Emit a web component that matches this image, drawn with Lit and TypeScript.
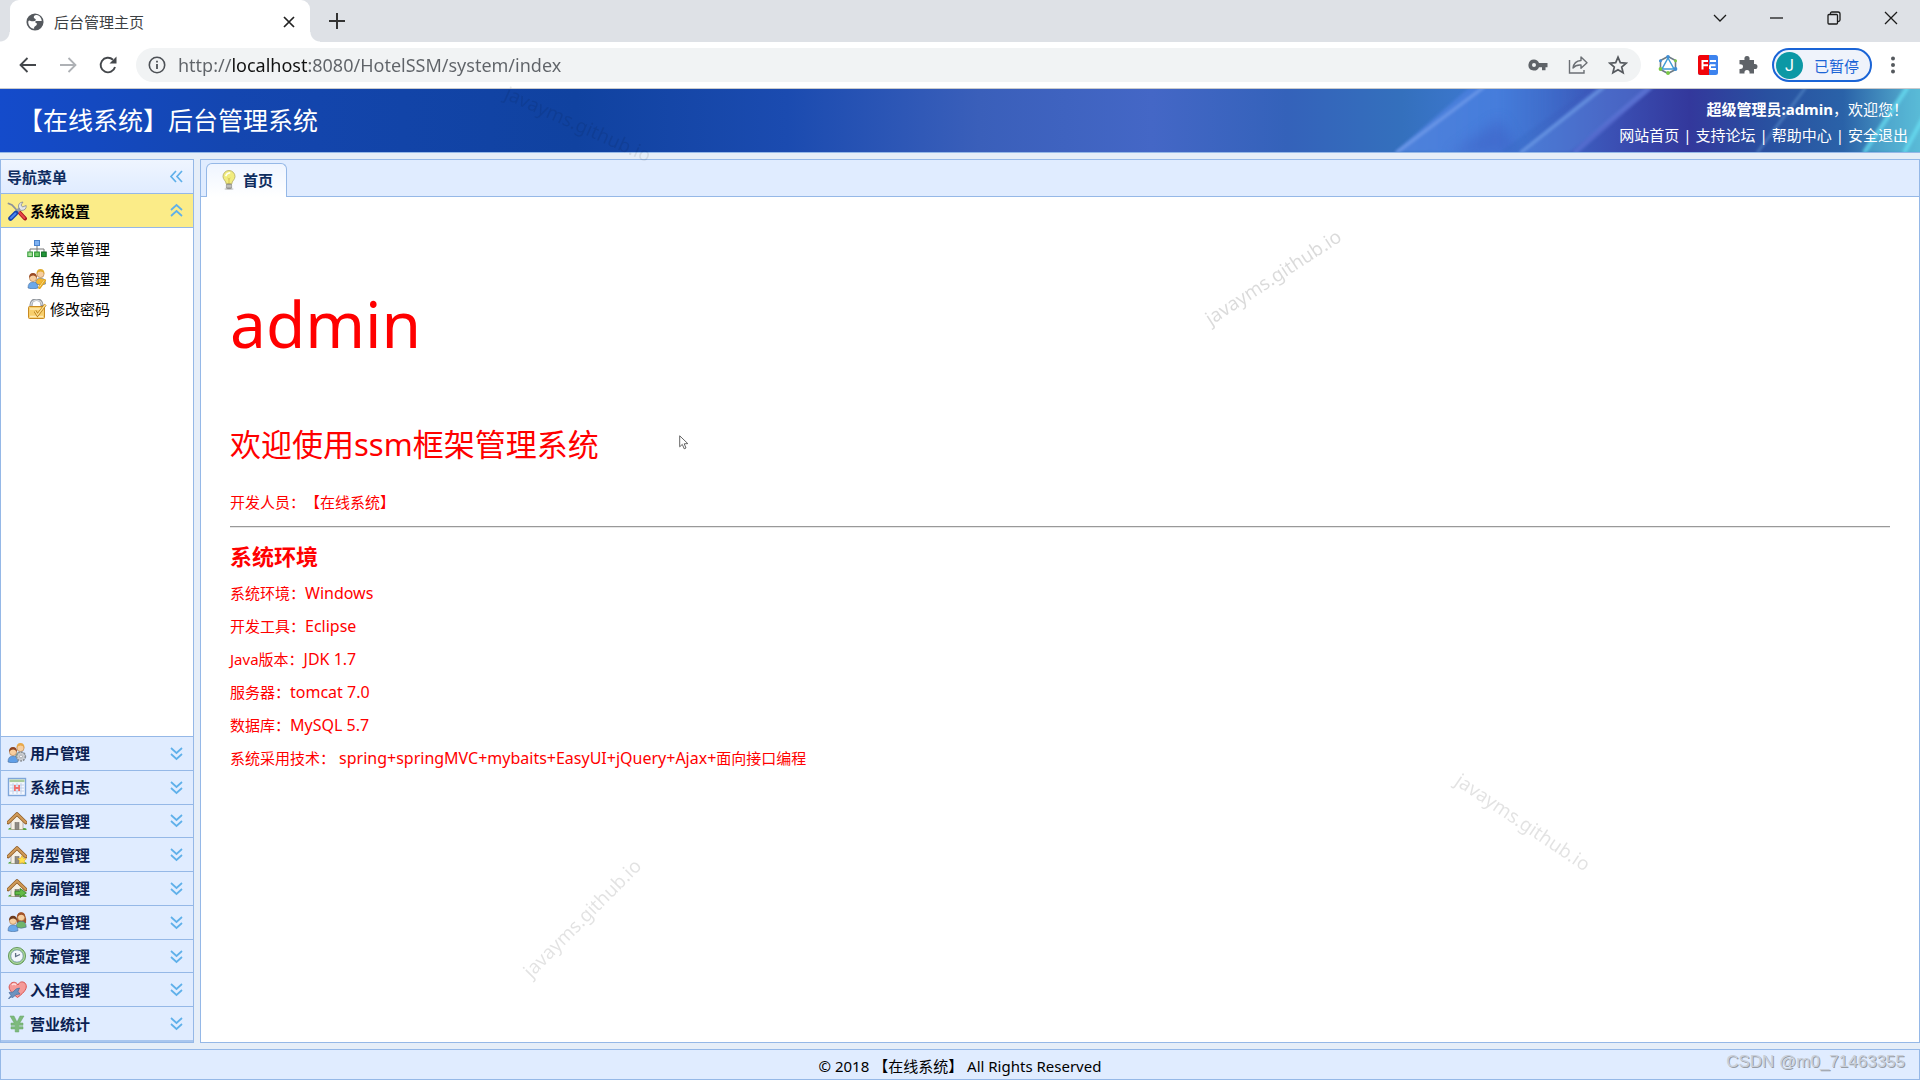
import { LitElement, html, css, svg, nothing } from "lit";
import { customElement, state } from "lit/decorators.js";

/* ---------- Icons ---------- */

const person = (x: number, y: number, hair: string, body: string) => svg`
  <path d="M${x - 5} ${y + 10} q0 -6 5 -6 q5 0 5 6 q-5 2 -10 0z" fill=${body} stroke="#4a6f9c" stroke-width=".6"/>
  <circle cx=${x} cy=${y} r="3.6" fill="#f7cfa0" stroke="#a0672e" stroke-width=".5"/>
  <path d="M${x - 4} ${y} q0 -5 4 -5 q4 0 4 5 q-2 -2.600 -4 -2.400 q-2 0 -4 2.400z" fill=${hair}/>`;

const house = svg`
  <path d="M1 18.500 q1 -2.500 4 -1.500 l12 0 q3 0 2.500 2z" fill="#4ea53a"/>
  <path d="M4 10 L10 4.500 L16 10 V18.500 H4z" fill="#f5f0e6" stroke="#a99c86" stroke-width=".7"/>
  <rect x="8" y="11.500" width="4" height="7" fill="#8e8a84" stroke="#6c6760" stroke-width=".5"/>
  <path d="M1.200 11.500 L10 3 L18.800 11.500" fill="none" stroke="#8b5a24" stroke-width="3.600" stroke-linejoin="round" stroke-linecap="round"/>
  <path d="M1.400 11.300 L10 3 L18.600 11.300" fill="none" stroke="#d09a58" stroke-width="2.200" stroke-linejoin="round" stroke-linecap="round"/>`;

const icons: Record<string, unknown> = {
  tools: svg`
    <path d="M1.500 2.500 L5 4 L12 11.500" stroke="#8d9299" stroke-width="1.800" fill="none" stroke-linecap="round"/>
    <path d="M12 11 L18 17.500" stroke="#a8141c" stroke-width="4" stroke-linecap="round"/>
    <path d="M12 11 L17.500 17" stroke="#e8474c" stroke-width="2" stroke-linecap="round"/>
    <path d="M13.500 7 L8 12.500" stroke="#9aa1a9" stroke-width="3.200"/>
    <path d="M11.500 6 q-.5 -4.500 4.500 -5 l-2 3 1.500 2 3.700 -1.500 q.5 5 -5.500 5z" fill="#e3e6ea" stroke="#858c94" stroke-width=".8"/>
    <path d="M9 12 L3.500 17.500" stroke="#1746ae" stroke-width="4.600" stroke-linecap="round"/>
    <path d="M8.500 12.500 L4 17" stroke="#4c86f0" stroke-width="2" stroke-linecap="round"/>`,
  sitemap: svg`
    <path d="M10 6 V10 M3 13 V10 H17 V13 M10 10 V13" stroke="#777" fill="none"/>
    <rect x="7.500" y="1.500" width="5" height="5" fill="#7fb2f2" stroke="#4a83cc"/>
    <rect x=".8" y="13" width="4.600" height="4.600" fill="#a7e29a" stroke="#2f9a37"/>
    <rect x="7.700" y="13" width="4.600" height="4.600" fill="#6ccb66" stroke="#1f8a2b"/>
    <rect x="14.600" y="13" width="4.600" height="4.600" fill="#23973a" stroke="#0d6a20"/>`,
  roles: svg`${person(13.5, 5, "#e0ac32", "#f2b733")}${person(6, 9, "#9a4a22", "#6aa8ea")}
    <path d="M12.500 18.500 l5 -7" stroke="#e4a51e" stroke-width="3" stroke-linecap="round"/>
    <path d="M12.500 18 l4.500 -6.500" stroke="#fbe08a" stroke-width="1" stroke-linecap="round"/>`,
  lock: svg`
    <path d="M4 9 V6 a5 5 0 0 1 11 0 V9" fill="none" stroke="#8f949b" stroke-width="3"/>
    <path d="M4 8 V6 a5 4.500 0 0 1 11 0" fill="none" stroke="#d8dbdf" stroke-width="1.200"/>
    <rect x="1.500" y="7.500" width="16" height="12" rx="1" fill="#f8cf6c" stroke="#c88a22"/>
    <path d="M3 10 H16 M3 17.500 H16" stroke="#fdeab4" stroke-width="1.400"/>
    <path d="M8 12 l2.500 4 L18.500 5.500" fill="none" stroke="#b47714" stroke-width="2.800"/>
    <path d="M8 12 l2.500 4 L18.500 5.500" fill="none" stroke="#ffe08a" stroke-width="1.400"/>`,
  users: svg`${person(13.5, 5, "#e8a94a", "#79b97c")}${person(6, 9, "#8f4420", "#5f9fe8")}
    <circle cx="14" cy="13.500" r="4.300" fill="#d5d7da" stroke="#8a8f96" stroke-width="1.800" stroke-dasharray="1.800 1"/>
    <circle cx="14" cy="13.500" r="3.400" fill="#c9ccd0"/><circle cx="14" cy="13.500" r="1.400" fill="#fff" stroke="#85898f" stroke-width=".6"/>`,
  log: svg`
    <rect x="1.500" y="1.500" width="17" height="17" fill="#f4f8ff" stroke="#7fa6da" stroke-width="1.400"/>
    <rect x="2.500" y="2.500" width="15" height="2.600" fill="#a9cb9c"/>
    <path d="M3 8 H17 M3 11 H17 M3 14 H17 M6 6 V17 M10 6 V17 M14 6 V17" stroke="#b9c9e4" stroke-width=".8"/>
    <path d="M7 8 h1.800 v2 h2.400 v-2 h1.800 v6 h-1.800 v-2 h-2.400 v2 h-1.800z" fill="#f0706e"/>`,
  house,
  houseStar: svg`${house}<path d="M15 10.500 l1.400 2.800 3 .4 -2.200 2.100 .6 3 -2.800 -1.500 -2.800 1.500 .6 -3 -2.200 -2.100 3 -.4z" fill="#ffe14e" stroke="#e0a81a" stroke-width=".6"/>`,
  houseGo: svg`${house}<path d="M8 13.200 h5 v-2.700 l6.400 4.500 -6.400 4.500 v-2.700 h-5z" fill="#62bb46" stroke="#2c7e1f" stroke-width=".8"/>`,
  customers: svg`
    <path d="M10 11 q-2 -10 4 -10.500 q6 .5 5 10.500z" fill="#a2542a"/>
    ${person(14.2, 5.2, "#a2542a", "#6fb56a")}${person(6, 8.8, "#6b3a1e", "#6aa8ea")}`,
  clock: svg`
    <circle cx="10" cy="10" r="8.600" fill="#7fb86f" stroke="#578f4c" stroke-width=".8"/>
    <circle cx="10" cy="10" r="7.400" fill="none" stroke="#b4dba6" stroke-width="1"/>
    <circle cx="10" cy="10" r="6.100" fill="#f2f6fb" stroke="#8ca6c4" stroke-width=".8"/>
    <path d="M8.600 7 V10.500 L13 8.500" fill="none" stroke="#5f6f86" stroke-width="1.300"/>`,
  heart: svg`
    <path d="M10.500 17.500 C2 11 1 7.500 3 4.500 C5.500 1 9.500 2 11 5 C12.500 1 17 1 18.800 4.200 C20.500 8 18 12 10.500 17.500z" fill="#f59a98" stroke="#d9534f" stroke-width="1"/>
    <path d="M5 5 q2 -2 4 0" stroke="#fde0df" stroke-width="1.600" fill="none"/>
    <path d="M1.500 18.500 l2.500 -3 -2 -3 4 -.5 q3 -4 6.500 -4 l-1.500 3.500 2 2.500 -4 .5 -3 3 -2 -.5 -1.500 1.500z" fill="#6d93bf" stroke="#4a6f9e" stroke-width=".7"/>`,
  yen: svg`
    <path d="M3 2 h4 l3 6 3 -6 h4 l-4.200 7 h3.200 v2.300 h-4.200 v1.400 h4.200 v2.300 h-4.200 v3 h-3.600 v-3 h-4.200 v-2.300 h4.200 v-1.400 h-4.200 v-2.300 h3.200z" fill="#7dba7c" stroke="#65a566" stroke-width=".5"/>`,
  bulb: svg`
    <ellipse cx="10" cy="19" rx="4.500" ry=".9" fill="#999" opacity=".5"/>
    <path d="M10 .5 a6 6 0 0 1 6 6.100 c0 3 -3 4.200 -3.300 7.400 h-5.400 c-.3 -3.200 -3.300 -4.400 -3.300 -7.400 A6 6 0 0 1 10 .5z" fill="#f1ec7e" stroke="#b9b168" stroke-width=".9"/>
    <path d="M7 5.500 q1 -2.500 3.500 -2.700" stroke="#fffff0" stroke-width="1.800" fill="none" stroke-linecap="round"/>
    <path d="M8.600 8 l1.400 1.200 1.400 -1.200 M10 9 V14" stroke="#cdb640" stroke-width=".7" fill="none"/>
    <rect x="7.400" y="14" width="5.200" height="4.500" rx="1" fill="#a9a9a4" stroke="#75756f" stroke-width=".6"/>
    <path d="M7.400 16 h5.200" stroke="#e5e5e0" stroke-width=".7"/>`,
};

const icon = (name: string) =>
  html`<svg class="icon" viewBox="0 0 20 20" width="20" height="20" aria-hidden="true">${icons[name]}</svg>`;

const chevrons = (dir: "up" | "down" | "left") => {
  const d = {
    up: "M2 7 L7.500 2 L13 7 M2 13 L7.500 8 L13 13",
    down: "M2 2 L7.500 7 L13 2 M2 8 L7.500 13 L13 8",
    left: "M7 2 L2 7.500 L7 13 M13 2 L8 7.500 L13 13",
  }[dir];
  return html`<svg viewBox="0 0 15 15" width="15" height="15" aria-hidden="true"><path d=${d} fill="none" stroke="#5fb0ea" stroke-width="1.700"/></svg>`;
};

/* ---------- Browser frame ---------- */

@customElement("browser-bar")
class BrowserBar extends LitElement {
  static styles = css`
    :host { display: block; font-family: "Noto Sans", "Noto Sans CJK SC", sans-serif; color: #3c4043; }
    svg { display: block; }
    button { border: 0; padding: 0; margin: 0; background: none; color: inherit; font: inherit; display: grid; place-items: center; }
    .strip { height: 42px; background: #dee1e6; display: flex; align-items: flex-start; padding: 0 1px 0 10px; }
    .tab { position: relative; height: 42px; width: 300px; box-sizing: border-box; background: #fff; border-radius: 9px 9px 0 0; display: flex; align-items: center; gap: 10px; padding: 2px 14px 0 16px; }
    .tab::before, .tab::after { content: ""; position: absolute; bottom: 0; width: 10px; height: 10px; }
    .tab::before { left: -10px; background: radial-gradient(circle at 0 0, transparent 9px, #fff 10px); }
    .tab::after { right: -10px; background: radial-gradient(circle at 100% 0, transparent 9px, #fff 10px); }
    .name { flex: 1; font-size: 15px; line-height: 20px; }
    .plus { width: 32px; height: 42px; margin-left: 11px; }
    .windows { margin-left: auto; display: flex; color: #1b1b1b; }
    .windows button { width: 57px; height: 36px; }
    .tools { height: 47px; box-sizing: border-box; border-bottom: 1px solid #c8cacd; background: #fff; display: flex; align-items: center; padding: 0 17px 0 8px; color: #5f6368; }
    .nav { width: 40px; height: 34px; }
    .nav svg { width: 22px; height: 22px; }
    .box { flex: 1; height: 34px; margin-left: 8px; border-radius: 17px; background: #f1f3f4; display: flex; align-items: center; padding: 0 13px 0 12px; }
    .url { flex: 1; min-width: 0; height: 30px; margin-left: 12px; border: 0; padding: 0; outline: none; font: 18px/30px "Noto Sans", sans-serif;
      background: linear-gradient(90deg, #5f6368 55px, #111 55px, #111 131px, #5f6368 131px); background-clip: text; -webkit-text-fill-color: transparent; }
    .box button { width: 20px; margin-left: 20px; }
    .ext { display: flex; gap: 20px; margin: 0 14px 0 17px; }
    .profile { height: 34px; border: 2px solid #1a64d6; border-radius: 17px; background: #eff3fb; display: flex; gap: 11px; padding: 0 11px 0 2px; color: #1a64d6; font-size: 15px; }
    .face { width: 27px; height: 27px; border-radius: 50%; background: #0c98a5; color: #fff; display: grid; place-items: center; font: 16px/27px Roboto, sans-serif; }
    .more { margin-left: 11px; width: 20px; height: 30px; }
  `;

  render() {
    return html`
      <div class="strip">
        <div class="tab">
          <svg viewBox="0 0 20 20" width="18" height="18" aria-hidden="true">
            <circle cx="10" cy="10" r="9.500" fill="#55595e"/>
            <path d="M10 2.500 q-2.500 2 -.5 3.500 q2.500 1 .5 3 q-3 .5 -5.500 -.5 q-2.500 -.5 -2 2.500 q1 5.500 6.500 6.500 q-.5 -2.500 1.500 -3 q2 -.5 1.500 -3 q-3 -1 -1 -2.500 q4 -.5 6.500 0 q-.5 -5 -4.500 -6.500 q-1 -.5 -3 0z" fill="#fff"/>
          </svg>
          <span class="name">后台管理主页</span>
          <button aria-label="关闭标签页"><svg width="14" height="14" viewBox="0 0 14 14"><path d="M2 2 L12 12 M12 2 L2 12" stroke="#222" stroke-width="1.700"/></svg></button>
        </div>
        <button class="plus" aria-label="新标签页"><svg width="16" height="16" viewBox="0 0 16 16"><path d="M8 0 V16 M0 8 H16" stroke="#333" stroke-width="2"/></svg></button>
        <div class="windows">
          <button aria-label="搜索标签页"><svg width="14" height="14" viewBox="0 0 14 14"><path d="M1 4 L7 10 L13 4" fill="none" stroke="currentColor" stroke-width="1.300"/></svg></button>
          <button aria-label="最小化"><svg width="13" height="14" viewBox="0 0 13 14"><path d="M0 7 H13" stroke="currentColor" stroke-width="1.300"/></svg></button>
          <button aria-label="还原"><svg width="14" height="14" viewBox="0 0 14 14" fill="none" stroke="currentColor" stroke-width="1.300"><rect x="1" y="3.500" width="9.500" height="9.500" rx="1"/><path d="M3.500 3.500 V2.500 q0 -1.500 1.500 -1.500 H11 q2 0 2 2 V9 q0 1.500 -2 1.500"/></svg></button>
          <button aria-label="关闭"><svg width="14" height="14" viewBox="0 0 14 14"><path d="M1 1 L13 13 M13 1 L1 13" stroke="currentColor" stroke-width="1.300"/></svg></button>
        </div>
      </div>
      <div class="tools">
        <button class="nav" aria-label="后退"><svg viewBox="0 0 22 22"><path d="M19 11 H4 M10.500 4 L3.500 11 L10.500 18" fill="none" stroke="#44474b" stroke-width="1.800"/></svg></button>
        <button class="nav" aria-label="前进"><svg viewBox="0 0 22 22"><path d="M3 11 H18 M11.500 4 L18.500 11 L11.500 18" fill="none" stroke="#aeb1b5" stroke-width="1.800"/></svg></button>
        <button class="nav" aria-label="重新加载"><svg viewBox="0 0 22 22"><path d="M18 13 A7.300 7.300 0 1 1 16 5.800" fill="none" stroke="#44474b" stroke-width="1.900"/><path d="M19.500 2.500 V9.500 H12.500z" fill="#44474b"/></svg></button>
        <div class="box">
          <svg width="18" height="18" viewBox="0 0 18 18" aria-hidden="true"><circle cx="9" cy="9" r="7.700" fill="none" stroke="#4d5156" stroke-width="1.600"/><path d="M9 8 V13 M9 4.800 V6.500" stroke="#4d5156" stroke-width="1.800"/></svg>
          <input class="url" aria-label="地址栏" value="http://localhost:8080/HotelSSM/system/index"/>
          <button aria-label="密码"><svg width="20" height="20" viewBox="0 0 20 20"><path fill-rule="evenodd" d="M6 4.500 a5.500 5.500 0 1 0 5 7.700 h3 v3 h3.500 v-3 H19.500 V8 H11 A5.500 5.500 0 0 0 6 4.500z M6 8 a2 2 0 1 1 0 4 a2 2 0 1 1 0 -4z" fill="#5f6368"/></svg></button>
          <button aria-label="分享"><svg width="20" height="20" viewBox="0 0 20 20" fill="none" stroke="#6b6f74" stroke-width="1.400"><path d="M1.500 5 V18 H16 V15"/><path d="M5 13 q1 -7 8 -7.500 V2 l6 5.800 -6 5.400 V10 q-5 -.5 -8 3z" stroke-linejoin="round"/></svg></button>
          <button aria-label="收藏"><svg width="20" height="20" viewBox="0 0 20 20"><path d="M10 2.200 L12.300 7.600 L18.200 8.100 L13.700 12 L15.100 17.800 L10 14.700 L4.900 17.800 L6.300 12 L1.800 8.100 L7.700 7.600z" fill="none" stroke="#55595e" stroke-width="1.700"/></svg></button>
        </div>
        <div class="ext">
          <button aria-label="扩展一"><svg width="20" height="20" viewBox="0 0 20 20"><path d="M10 1.500 L17.500 5.500 V14.500 L10 18.500 L2.500 14.500 V5.500z" fill="none" stroke="#6d7c86" stroke-width="1.600"/><path d="M10 3 L16 14 H4z" fill="#fff" stroke="#3f9bd6" stroke-width="1.500"/><circle cx="10" cy="1.800" r="1.800" fill="#3f8fd6"/><circle cx="10" cy="18" r="1.900" fill="#7ac943"/><circle cx="2.500" cy="14" r="1.900" fill="#7ac943"/><circle cx="17.500" cy="14" r="1.900" fill="#3f8fd6"/><circle cx="2.500" cy="5.800" r="1.500" fill="#3f8fd6"/><circle cx="17.500" cy="5.800" r="1.500" fill="#7ac943"/></svg></button>
          <button aria-label="扩展二"><svg width="20" height="20" viewBox="0 0 20 20"><rect width="20" height="20" rx="2.500" fill="#3d83ee"/><path d="M2.500 0 H11 V20 H2.500 A2.500 2.500 0 0 1 0 17.500 V2.500 A2.500 2.500 0 0 1 2.500 0z" fill="#f1050b"/><path d="M10 6 H4.500 V14.500 M4.500 10.200 H10 M12 6 H18 M12 10.200 H17.500 M12 14 H18 M12 10.200 V14" fill="none" stroke="#fff" stroke-width="2"/></svg></button>
          <button aria-label="扩展程序"><svg width="20" height="20" viewBox="0 0 20 20"><path d="M1.500 5 H6.500 Q5.800 1 9 1 Q12.200 1 11.500 5 H16 V9 Q19.500 8.500 19.500 11.500 Q19.500 14.500 16 14 V18.500 H11.500 Q12 15 9 15 Q6 15 6.500 18.500 H1.500 V14 Q5 14.300 5 11.500 Q5 9 1.500 9.300z" fill="#5f6368"/></svg></button>
        </div>
        <button class="profile"><span class="face">J</span>已暂停</button>
        <button class="more" aria-label="更多"><svg width="6" height="20" viewBox="0 0 6 20" fill="#55595e"><circle cx="3" cy="3.500" r="2"/><circle cx="3" cy="10" r="2"/><circle cx="3" cy="16.500" r="2"/></svg></button>
      </div>`;
  }
}

/* ---------- Page header ---------- */

@customElement("page-header")
class PageHeader extends LitElement {
  static styles = css`
    :host { position: relative; display: flex; align-items: center; justify-content: space-between; height: 64px; box-sizing: border-box;
      border-bottom: 1px solid #95b8e7; padding: 0 12px 2px 18px; color: #fff; overflow: hidden;
      background: linear-gradient(90deg, #144bcb 0, #1446b0 12%, #1042a0 30%, #1b4bb0 41%, #3a5fba 51%, #4467c6 60%, #3462ba 67%, #3470bd 73%, #3f7ad4 78%, #3b50b4 84%, #33389c 88%, #2950a0 92%, #2a62a8 96%, #58b4d2 100%); }
    .art { position: absolute; inset: 0; width: 100%; height: 100%; }
    h1 { position: relative; margin: 0; font-size: 25px; line-height: 32px; font-weight: 400; }
    .user { position: relative; text-align: right; font-size: 15px; line-height: 26px; padding-top: 4px; }
    nav { display: flex; justify-content: flex-end; gap: 4px; }
    a { color: inherit; text-decoration: none; }
  `;

  render() {
    return html`
      <svg class="art" viewBox="0 0 1920 63" preserveAspectRatio="none" aria-hidden="true">
        <defs>
          <filter id="soft" x="-20%" y="-20%" width="140%" height="140%"><feGaussianBlur stdDeviation="1.500"/></filter>
          <filter id="wide" x="-40%" y="-40%" width="180%" height="180%"><feGaussianBlur stdDeviation="7"/></filter>
          <linearGradient id="band" x1="0" x2="1"><stop offset="0" stop-color="#5b8ae8"/><stop offset=".5" stop-color="#4a7fe0"/><stop offset="1" stop-color="#3f6ecb" stop-opacity="0"/></linearGradient>
        </defs>
        <polygon points="1395,63 1470,-2 1590,-2 1500,63" fill="url(#band)" opacity=".7" filter="url(#soft)"/>
        <polygon points="1450,66 1500,30 1520,66" fill="#3a55bc" opacity=".4" filter="url(#wide)"/>
        <polygon points="1520,63 1598,-2 1655,-2 1570,63" fill="#5f8be2" opacity=".4" filter="url(#soft)"/>
        <path d="M1396 64 L1484 -2" stroke="#84a9f2" stroke-width="3" opacity=".6" filter="url(#soft)"/>
        <path d="M1520 64 L1604 -2" stroke="#7ba9ee" stroke-width="3" opacity=".6" filter="url(#soft)"/>
        <path d="M1574 64 L1650 -2" stroke="#6a7ee0" stroke-width="5" opacity=".5" filter="url(#soft)"/>
        <path d="M1757 64 L1806 -2" stroke="#6fa5dc" stroke-width="2" opacity=".6" filter="url(#soft)"/>
        <polygon points="1862,63 1904,-2 1930,-2 1930,63" fill="#5cc4de" opacity=".45" filter="url(#soft)"/>
        <path d="M1864 64 L1908 -2 M1904 64 L1930 16" stroke="#6ff0ff" stroke-width="4" opacity=".55" filter="url(#soft)"/>
      </svg>
      <h1>【在线系统】后台管理系统</h1>
      <div class="user">
        <div><b>超级管理员:admin</b>，欢迎您！</div>
        <nav>
          <a href="#home">网站首页</a><span>|</span><a href="#forum">支持论坛</a><span>|</span><a href="#help">帮助中心</a><span>|</span><a href="#logout">安全退出</a>
        </nav>
      </div>`;
  }
}

/* ---------- Accordion menu ---------- */

@customElement("side-menu")
class SideMenu extends LitElement {
  @state() private open = true;

  private readonly groups = [
    ["users", "用户管理"], ["log", "系统日志"], ["house", "楼层管理"], ["houseStar", "房型管理"], ["houseGo", "房间管理"],
    ["customers", "客户管理"], ["clock", "预定管理"], ["heart", "入住管理"], ["yen", "营业统计"],
  ];

  static styles = css`
    :host { display: flex; flex-direction: column; box-sizing: border-box; border: 1px solid #95b8e7; background: #fff; font-size: 15px; line-height: 20px; min-height: 0; }
    svg { display: block; flex: none; }
    button { border: 0; margin: 0; background: none; font: inherit; text-align: left; color: inherit; padding: 0; }
    .title { display: flex; align-items: center; justify-content: space-between; height: 33px; padding: 0 9px 0 6px; font-weight: 700; color: #0e2d5f; border-bottom: 1px solid #95b8e7; background: linear-gradient(#eff5ff, #e0ecff); }
    .group { display: flex; align-items: center; gap: 3px; width: 100%; padding: 0 9px 0 6px; font-weight: 700; color: #0b1f52; background: #e0ecff; border-top: 1px solid #95b8e7; box-sizing: border-box; }
    .group span { flex: 1; }
    .selected { height: 34px; background: #fbec88; color: #000; border-top: 0; border-bottom: 1px solid #95b8e7; }
    .items { flex: 1; list-style: none; margin: 0; padding: 6px 0 0 26px; }
    .items a { display: flex; align-items: center; gap: 3px; height: 30px; color: #000; text-decoration: none; }
    .closed { display: grid; grid-auto-rows: 1fr; height: 306px; border-bottom: 2px solid #a9c6ee; box-sizing: border-box; }
  `;

  render() {
    return html`
      <div class="title">导航菜单<button aria-label="折叠菜单">${chevrons("left")}</button></div>
      <button class="group selected" aria-expanded=${this.open} @click=${() => (this.open = !this.open)}>
        ${icon("tools")}<span>系统设置</span>${chevrons(this.open ? "up" : "down")}
      </button>
      <ul class="items">
        ${this.open
          ? [["sitemap", "菜单管理"], ["roles", "角色管理"], ["lock", "修改密码"]].map(
              ([i, t]) => html`<li><a href="#${i}">${icon(i)}${t}</a></li>`)
          : nothing}
      </ul>
      <div class="closed">
        ${this.groups.map(([i, t]) => html`<button class="group" aria-expanded="false">${icon(i)}<span>${t}</span>${chevrons("down")}</button>`)}
      </div>`;
  }
}

/* ---------- Main tab ---------- */

@customElement("main-panel")
class MainPanel extends LitElement {
  static styles = css`
    :host { position: relative; display: flex; flex-direction: column; min-width: 0; box-sizing: border-box; border: 1px solid #95b8e7; background: #fff; }
    svg { display: block; }
    .tabs { display: flex; align-items: flex-end; height: 37px; box-sizing: border-box; border-bottom: 1px solid #95b8e7; background: #e0ecff; padding-left: 5px; }
    .tab { height: 34px; margin-bottom: -1px; box-sizing: border-box; border: 1px solid #95b8e7; border-bottom: 0; border-radius: 6px 6px 0 0; background: linear-gradient(#eff5ff, #fff); display: flex; align-items: center; gap: 4px; padding: 0 13px 2px 12px; font: inherit; font-size: 15px; font-weight: 700; color: #0e2d5f; }
    .body { padding: 82px 29px 0; color: #f00; font-size: 15px; line-height: 20px; }
    .body p { margin: 0; }
    .body .who { font-size: 64px; line-height: 90px; }
    .body .welcome { font-size: 31px; line-height: 42px; margin-top: 54px; }
    .body .dev { margin: 27px 0 14px; }
    hr { margin: 0; border: 0; border-top: 1px solid #999; border-bottom: 1px solid #e6e6e6; }
    h2 { margin: 13px 0 6px; font-size: 22px; line-height: 30px; }
    dl { margin: 0; line-height: 33px; }
    dl div { display: flex; }
    dd { margin: 0; font-size: 16px; }
    .wide { margin-left: 4px; }
    .han { font-size: 15px; }
    .pointer { position: absolute; left: 478px; top: 275px; }
  `;

  render() {
    const facts = [
      ["系统环境：", "Windows"], ["开发工具：", "Eclipse"], ["Java版本：", "JDK 1.7"], ["服务器：", "tomcat 7.0"],
      ["数据库：", "MySQL 5.7"],
    ];
    return html`
      <div class="tabs" role="tablist"><button class="tab" role="tab" aria-selected="true">${icon("bulb")}首页</button></div>
      <div class="body">
        <p class="who">admin</p>
        <p class="welcome">欢迎使用ssm框架管理系统</p>
        <p class="dev">开发人员：【在线系统】</p>
        <hr />
        <h2>系统环境</h2>
        <dl>
          ${facts.map(([k, v]) => html`<div><dt>${k}</dt><dd>${v}</dd></div>`)}
          <div><dt>系统采用技术：</dt><dd class="wide">spring+springMVC+mybaits+EasyUI+jQuery+Ajax+<span class="han">面向接口编程</span></dd></div>
        </dl>
      </div>
      <svg class="pointer" width="10" height="15" viewBox="0 0 10 15" aria-hidden="true"><path d="M.7 .8 V11.800 L3.300 9.400 L5.200 13.800 L7 13 L5.200 8.800 L8.800 8.600z" fill="#fff" stroke="#555" stroke-width=".9"/></svg>`;
  }
}

/* ---------- App ---------- */

@customElement("app-root")
class AppRoot extends LitElement {
  static styles = css`
    :host { position: relative; display: flex; flex-direction: column; height: 100vh; overflow: hidden; background: #e6eef8; font-family: "Noto Sans", "Noto Sans CJK SC", sans-serif; font-size: 15px; text-spacing-trim: space-all; }
    .middle { flex: 1; min-height: 0; display: grid; grid-template-columns: 194px minmax(0, 1fr); gap: 6px; padding: 6px 0; }
    footer { height: 31px; box-sizing: border-box; border: 1px solid #95b8e7; background: #e0ecff; text-align: center; line-height: 32px; color: #000; }
    .mark { position: absolute; font-size: 19px; line-height: 24px; color: #000; opacity: .11; pointer-events: none; transform: translate(-50%, -50%) rotate(var(--turn)); }
    .m1 { left: 1273px; top: 277px; --turn: -33deg; opacity: .14; }
    .m2 { left: 1523px; top: 822px; --turn: 34deg; }
    .m3 { left: 582px; top: 918px; --turn: -45deg; }
    .m4 { left: 578px; top: 124px; --turn: 24deg; opacity: .08; }
    .csdn { position: absolute; right: 15px; bottom: 8px; font: 17px/20px "Liberation Sans", sans-serif; color: #c9cfd8; text-shadow: 1px 1px 0 #979da6; }
  `;

  render() {
    return html`
      <browser-bar></browser-bar>
      <page-header></page-header>
      <div class="middle"><side-menu></side-menu><main-panel></main-panel></div>
      <footer>© 2018 【在线系统】 All Rights Reserved</footer>
      ${[1, 2, 3, 4].map((n) => html`<span class="mark m${n}">javayms.github.io</span>`)}
      <span class="csdn">CSDN @m0_71463355</span>`;
  }
}
